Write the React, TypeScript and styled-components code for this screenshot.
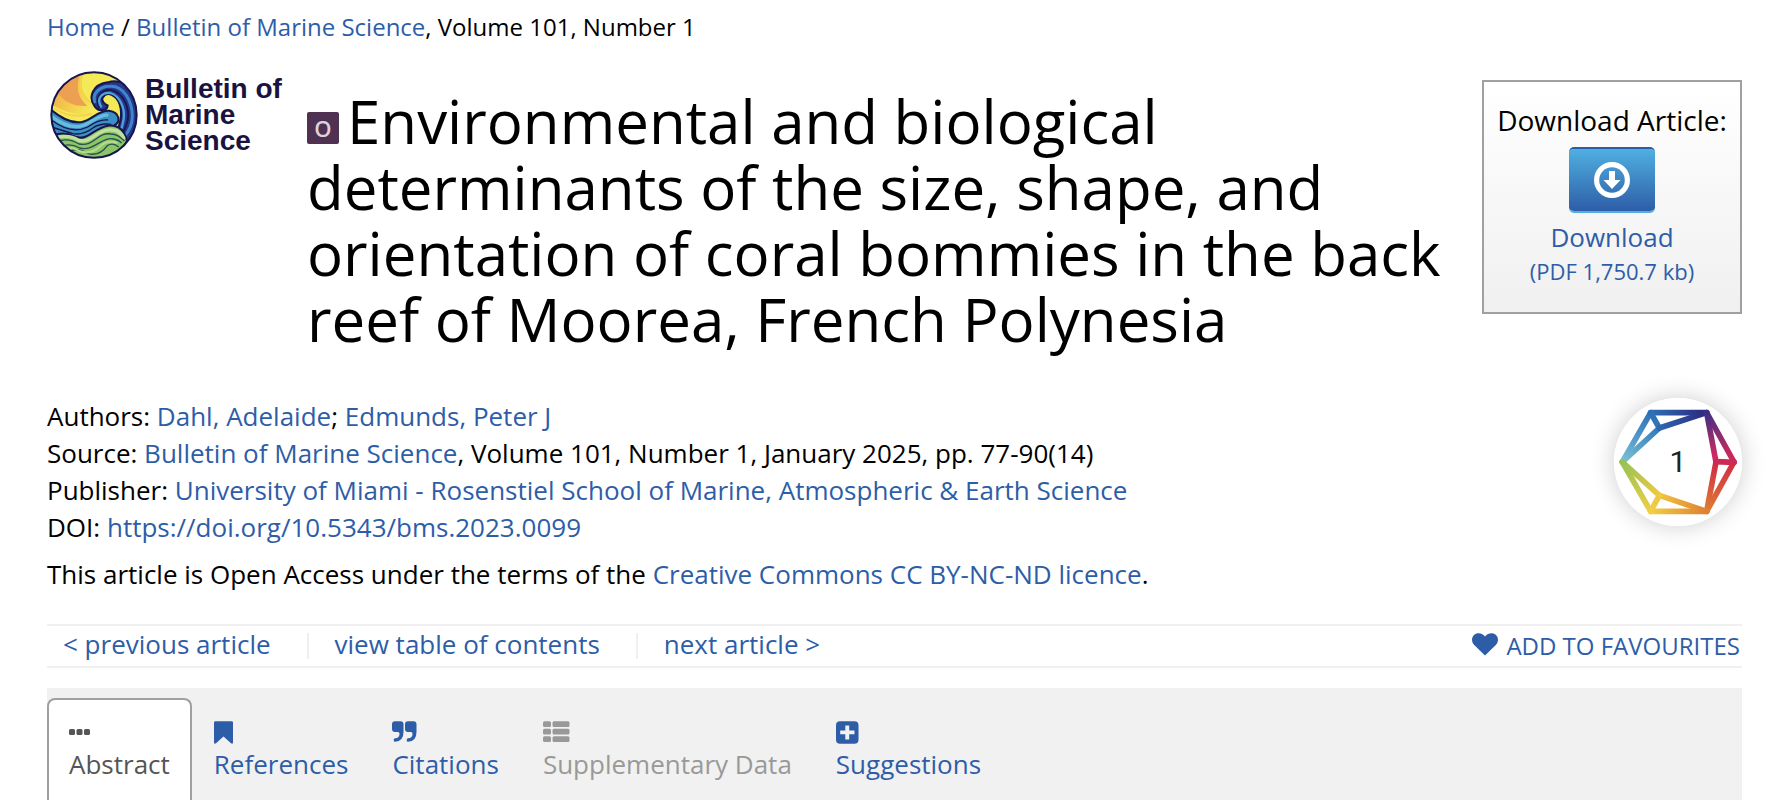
import React from "react";
import styled, { createGlobalStyle, css } from "styled-components";

const GlobalStyle = createGlobalStyle`
  *, *::before, *::after { box-sizing: border-box; }
  body {
    margin: 0;
    background: #fff;
    color: #000;
    font-family: "Open Sans", sans-serif;
    font-size: 26px;
    line-height: 37px;
  }
`;

const Page = styled.div`
  padding: 9px 26px 0 47px;
`;

const Link = styled.a`
  color: #2e5da8;
  text-decoration: none;
  &:hover { text-decoration: underline; }
`;

const Breadcrumb = styled.nav`
  font-size: 24px;
  line-height: 36px;
`;

const Header = styled.header`
  display: flex;
  align-items: flex-start;
  padding-top: 24px;
`;

const Brand = styled.a`
  display: flex;
  flex: none;
  align-items: center;
  gap: 6px;
  width: 260px;
  padding: 1px 0 0 2px;
  color: #1a1340;
  text-decoration: none;
  font: bold 28px/26px "Liberation Sans", sans-serif;
`;

const Title = styled.h1`
  flex: 1;
  margin: 19px 20px 0 0;
  font-size: 60px;
  font-weight: 400;
  line-height: 66px;
`;

const OpenBadge = styled.span`
  display: inline-block;
  overflow: hidden;
  width: 32px;
  height: 32px;
  margin-right: 8px;
  border-radius: 2px;
  background: #4f3151;
  color: #ddd3de;
  font: 600 22px/32px "Open Sans", sans-serif;
  text-align: center;
`;

const DownloadBox = styled.aside`
  flex: none;
  display: flex;
  flex-direction: column;
  align-items: center;
  width: 260px;
  height: 234px;
  margin-top: 11px;
  padding-top: 19px;
  border: 2px solid #a0a0a0;
  background: linear-gradient(#fff, #f0f0f0);
  font-size: 28px;
  line-height: 38px;
`;

const DownloadButton = styled.button`
  display: flex;
  align-items: center;
  justify-content: center;
  width: 86px;
  height: 66px;
  margin: 8px 0 6px;
  padding: 0;
  border: solid;
  border-width: 2px 0;
  border-color: #2e5da8 transparent #4fb0e0;
  border-radius: 5px;
  background: linear-gradient(#4fb0e0, #2e5da8);
  background-clip: padding-box;
  cursor: pointer;
`;

const DownloadLink = styled(Link)`
  display: flex;
  flex-direction: column;
  align-items: center;
  font-size: 26px;
  line-height: 36px;
`;

const FileSize = styled.small`
  font-size: 22px;
  line-height: 32px;
`;

const Details = styled.section`
  display: flex;
  justify-content: space-between;
  padding-top: 46px;
`;

const Line = styled.div`
  line-height: ${(p: { $spaced?: boolean }) => (p.$spaced ? "56px" : "37px")};
`;

const Citations = styled.a`
  flex: none;
  display: grid;
  place-items: center;
  width: 128px;
  height: 128px;
  border-radius: 50%;
  box-shadow: 0 0 24px rgba(0, 0, 0, 0.2);
  color: #222;
  font: 30px/30px Roboto, sans-serif;
  text-decoration: none;
  > * { grid-area: 1 / 1; }
`;

const ArticleNav = styled.nav`
  display: flex;
  align-items: center;
  height: 44px;
  margin: 22px 0 20px;
  padding: 0 2px 0 16px;
  border: solid #f0f0f0;
  border-width: 2px 0;
`;

const NavItem = styled.span`
  display: flex;
  align-items: center;
  height: 26px;
  line-height: 26px;
  & > a { padding-bottom: 5px; }
  & + & {
    margin-left: 36px;
    padding-left: 26px;
    border-left: 2px solid #f0f0f0;
  }
`;

const Favourite = styled.button`
  display: flex;
  align-items: center;
  gap: 8px;
  margin-left: auto;
  padding: 0;
  border: 0;
  background: none;
  color: #2e5da8;
  font: 24px/40px "Open Sans", sans-serif;
  cursor: pointer;
  svg { margin-bottom: 4px; }
`;

const Tabs = styled.div`
  display: flex;
  height: 112px;
  padding-top: 10px;
  background: #f1f1f1;
`;

const Tab = styled.button<{ $active?: boolean }>`
  display: flex;
  flex-direction: column;
  align-items: flex-start;
  gap: 2px;
  padding: 23px 22px 0;
  border: 0;
  background: none;
  color: #2e5da8;
  font: 26px/36px "Open Sans", sans-serif;
  cursor: pointer;
  &:disabled { color: #999; cursor: default; }
  ${(p) =>
    p.$active &&
    css`
      padding: 21px 20px 0;
      border: 2px solid #a0a0a0;
      border-bottom: 0;
      border-radius: 8px 8px 0 0;
      background: #fff;
      color: #555;
    `}
`;

const LogoMark = () => (
  <svg width="90" height="90" viewBox="27 31 270 270" aria-hidden="true">
    <defs>
      <clipPath id="disc"><circle cx="162" cy="166" r="128" /></clipPath>
      <linearGradient id="sun" x1="0" y1="0.2" x2="1" y2="0.7">
        <stop offset="0" stopColor="#f0a04e" />
        <stop offset="0.5" stopColor="#f3c94b" />
        <stop offset="1" stopColor="#f3ea58" />
      </linearGradient>
    </defs>
    <g clipPath="url(#disc)">
      <path fill="#f4e956" d="M30 30h270v270H30z" />
      <path fill="url(#sun)" d="M30 130C60 70 100 45 132 38C110 95 140 125 176 152C130 175 70 160 30 130z" />
      <path fill="#eea052" d="M52 98Q75 60 118 50Q102 105 142 139Q82 143 52 98z" />
      <path fill="none" stroke="#f5d34c" strokeWidth="6" d="M124 44Q112 102 158 133M42 145Q90 180 155 162" />
      <path fill="#28368f" stroke="#17164a" strokeWidth="6" d="M300 110Q255 52 202 68C158 75 143 111 164 140C176 158 202 153 203 137C192 133 184 123 188 114C201 92 229 107 239 134C249 164 239 198 230 215L252 268L300 245z" />
      <path fill="none" stroke="#3d86c7" strokeWidth="9" d="M166 130C154 105 176 80 210 80C250 77 277 124 277 170C277 199 263 219 254 230" />
      <path fill="none" stroke="#17164a" strokeWidth="5" d="M178 145C161 113 188 88 214 91C250 100 270 143 263 183Q258 205 247 221" />
      <path fill="none" stroke="#4ba3d5" strokeWidth="7" d="M185 143C164 114 190 97 211 100C240 108 256 148 251 179Q247 202 240 218" />
      <path fill="#3c8fc5" stroke="#17164a" strokeWidth="6" d="M30 148C60 173 91 193 126 187C157 181 173 151 207 153C240 158 243 187 222 198C172 204 143 250 96 229Q63 214 38 236z" />
      <path fill="none" stroke="#66bedf" strokeWidth="10" d="M35 171Q91 213 134 196C164 181 187 162 205 167" />
      <path fill="none" stroke="#17164a" strokeWidth="4" d="M34 181C74 211 112 217 143 202Q177 178 204 181M34 202Q75 214 98 222Q130 227 160 204Q181 190 214 194" />
      <path fill="#8cc568" stroke="#17164a" strokeWidth="6" d="M39 227Q72 215 103 230C143 248 158 205 205 198Q250 195 261 244L225 300L86 300z" />
      <path fill="none" stroke="#c3dfa0" strokeWidth="10" d="M48 235Q85 223 116 242C155 253 173 205 217 211Q240 211 253 238" />
      <path fill="none" stroke="#28504c" strokeWidth="4" d="M50 246Q84 232 117 253C163 263 171 216 213 223Q235 224 253 244M62 260Q91 249 119 265C163 276 185 229 222 238Q237 241 245 250M84 277Q112 262 142 281Q178 292 202 258Q219 247 236 262" />
      <path fill="none" stroke="#b7db8f" strokeWidth="6" d="M70 267Q94 259 118 274Q151 286 177 263Q201 239 232 250" />
    </g>
    <circle cx="162" cy="166" r="128" fill="none" stroke="#17164a" strokeWidth="6" />
  </svg>
);

const DownloadIcon = () => (
  <svg width="36" height="36" viewBox="0 0 36 36" aria-hidden="true">
    <circle cx="18" cy="18" r="15.4" fill="none" stroke="#fff" strokeWidth="5.2" />
    <path fill="#fff" d="M15 9h6v9h5.5L18 27l-8.500-9H15z" />
  </svg>
);

const ring = [
  ["M97 246L182 98", "#76c1dc", "#2e70b6", 97, 246, 182, 98],
  ["M182 98L350 98", "#2d70b6", "#2c2f83", 182, 98, 330, 98],
  ["M97 246L208 144", "#7cc4d0", "#3177bb", 97, 246, 208, 144],
  ["M182 98L208 144", "#2e70b6", "#3177bb", 182, 98, 208, 144],
  ["M208 144L350 98", "#2f68b0", "#2c2f83", 208, 144, 330, 98],
  ["M350 98L432 246", "#46308a", "#c9285a", 350, 98, 420, 226],
  ["M350 98L378 246", "#3a2f86", "#cf2960", 350, 98, 378, 226],
  ["M432 246L350 394", "#cf2846", "#df8030", 432, 246, 350, 394],
  ["M378 246L350 394", "#cf2846", "#df8030", 378, 246, 350, 394],
  ["M350 394L182 394", "#df8030", "#f0d044", 350, 394, 182, 394],
  ["M350 394L208 346", "#df8030", "#f2c440", 350, 394, 208, 346],
  ["M182 394L208 346", "#efcf45", "#efc641", 182, 394, 208, 346],
  ["M182 394L97 246", "#efd045", "#96c255", 182, 394, 97, 246],
  ["M208 346L97 246", "#efca43", "#96c255", 208, 346, 97, 246],
] as const;

const CitationRing = () => (
  <svg width="128" height="128" viewBox="72 54 384 384" aria-hidden="true">
    <circle cx="264" cy="246" r="192" fill="#fff" />
    <defs>
      {ring.map(([d, from, to, x1, y1, x2, y2], i) => (
        <linearGradient key={d} id={`ring${i}`} gradientUnits="userSpaceOnUse" x1={x1} y1={y1} x2={x2} y2={y2}>
          <stop offset="0" stopColor={from} />
          <stop offset="1" stopColor={to} />
        </linearGradient>
      ))}
      <linearGradient id="spoke" gradientUnits="userSpaceOnUse" x1="0" y1="238" x2="0" y2="254">
        <stop offset="0" stopColor="#c92961" />
        <stop offset="1" stopColor="#d02a48" />
      </linearGradient>
    </defs>
    <g fill="none" strokeWidth="17" strokeLinecap="round">
      {ring.map(([d], i) => (
        <path key={d} d={d} stroke={`url(#ring${i})`} />
      ))}
      <path d="M378 245L432 247" stroke="url(#spoke)" />
    </g>
  </svg>
);

const HeartIcon = () => (
  <svg width="26" height="23" viewBox="0 0 26 23" fill="currentColor" aria-hidden="true">
    <path d="M13 22.500L2.200 12C-.8 9-.5 4.400 1.800 2.200C5-.8 9.800-.3 13 3.500C16.200-.3 21-.8 24.200 2.200C26.500 4.400 26.800 9 23.800 12z" />
  </svg>
);

const TabIcon = ({ children }: { children: React.ReactNode }) => (
  <svg width="27" height="23" viewBox="0 0 27 23" fill="currentColor" aria-hidden="true">{children}</svg>
);

const DotsIcon = () => (
  <TabIcon>
    <rect x="0" y="8" width="6" height="6" rx="1.500" />
    <rect x="7.500" y="8" width="6" height="6" rx="1.500" />
    <rect x="15" y="8" width="6" height="6" rx="1.500" />
  </TabIcon>
);

const BookmarkIcon = () => (
  <TabIcon>
    <path d="M0 1.500Q0 .2 1.500.2H17.500Q19 .2 19 1.500V21.500Q18.700 23.500 17 22.300L9.500 15.500L2 22.300Q.3 23.500 0 21.500z" />
  </TabIcon>
);

const QuoteIcon = () => (
  <TabIcon>
    <path d="M3 .3H8.500Q11.500.3 11.500 3.300V11Q11.500 20.500 3 20.800Q1.800 20.800 1.800 19.700V18.400Q1.800 17.500 3 17.300Q7.700 17 7.500 12.500Q7.400 11 6 11H3Q0 11 0 8V3.300Q0 .3 3 .3z" />
    <path d="M16 .3H21.500Q24.500.3 24.500 3.300V11Q24.500 20.500 16 20.800Q14.800 20.800 14.800 19.700V18.400Q14.800 17.500 16 17.300Q20.700 17 20.500 12.500Q20.400 11 19 11H16Q13 11 13 8V3.300Q13 .3 16 .3z" />
  </TabIcon>
);

const ListIcon = () => (
  <TabIcon>
    {[0.3, 7.8, 15.2].map((y) => (
      <React.Fragment key={y}>
        <rect x="0" y={y} width="8" height="5.800" rx="1.500" />
        <rect x="9.500" y={y} width="17" height="5.800" rx="1.500" />
      </React.Fragment>
    ))}
  </TabIcon>
);

const PlusIcon = () => (
  <TabIcon>
    <path fillRule="evenodd" d="M4 .3H18.500Q22.500.3 22.500 4.300V18.700Q22.500 22.700 18.500 22.700H4Q0 22.700 0 18.700V4.300Q0 .3 4 .3zM9.300 4.500V9.600H4.200V13.200H9.300V18.500H13.200V13.200H18.500V9.600H13.200V4.500z" />
  </TabIcon>
);

export default function App() {
  return (
    <>
      <GlobalStyle />
      <Page>
        <Breadcrumb aria-label="Breadcrumb">
          <Link href="#home">Home</Link> / <Link href="#journal">Bulletin of Marine Science</Link>, Volume 101, Number 1
        </Breadcrumb>
        <Header>
          <Brand href="#journal">
            <LogoMark />
            <span>Bulletin of<br />Marine<br />Science</span>
          </Brand>
          <Title>
            <OpenBadge>O</OpenBadge>Environmental and biological determinants of the size, shape, and orientation of coral bommies in the back reef of Moorea, French Polynesia
          </Title>
          <DownloadBox>
            <div>Download Article:</div>
            <DownloadButton aria-label="Download article"><DownloadIcon /></DownloadButton>
            <DownloadLink href="#download">
              Download
              <FileSize>(PDF 1,750.7 kb)</FileSize>
            </DownloadLink>
          </DownloadBox>
        </Header>
        <Details>
          <div>
            <Line>Authors: <Link href="#dahl">Dahl, Adelaide</Link>; <Link href="#edmunds">Edmunds, Peter J</Link></Line>
            <Line>Source: <Link href="#journal">Bulletin of Marine Science</Link>, Volume 101, Number 1, January 2025, pp. 77-90(14)</Line>
            <Line>Publisher: <Link href="#publisher">University of Miami - Rosenstiel School of Marine, Atmospheric &amp; Earth Science</Link></Line>
            <Line>DOI: <Link href="#doi">https://doi.org/10.5343/bms.2023.0099</Link></Line>
            <Line $spaced>This article is Open Access under the terms of the <Link href="#licence">Creative Commons CC BY-NC-ND licence</Link>.</Line>
          </div>
          <Citations href="#citations"><CitationRing /><span>1</span></Citations>
        </Details>
        <ArticleNav aria-label="Article">
          <NavItem><Link href="#previous">&lt; previous article</Link></NavItem>
          <NavItem><Link href="#contents">view table of contents</Link></NavItem>
          <NavItem><Link href="#next">next article &gt;</Link></NavItem>
          <Favourite><HeartIcon />ADD TO FAVOURITES</Favourite>
        </ArticleNav>
        <Tabs role="tablist">
          <Tab role="tab" aria-selected $active><DotsIcon />Abstract</Tab>
          <Tab role="tab"><BookmarkIcon />References</Tab>
          <Tab role="tab"><QuoteIcon />Citations</Tab>
          <Tab role="tab" disabled><ListIcon />Supplementary Data</Tab>
          <Tab role="tab"><PlusIcon />Suggestions</Tab>
        </Tabs>
      </Page>
    </>
  );
}
